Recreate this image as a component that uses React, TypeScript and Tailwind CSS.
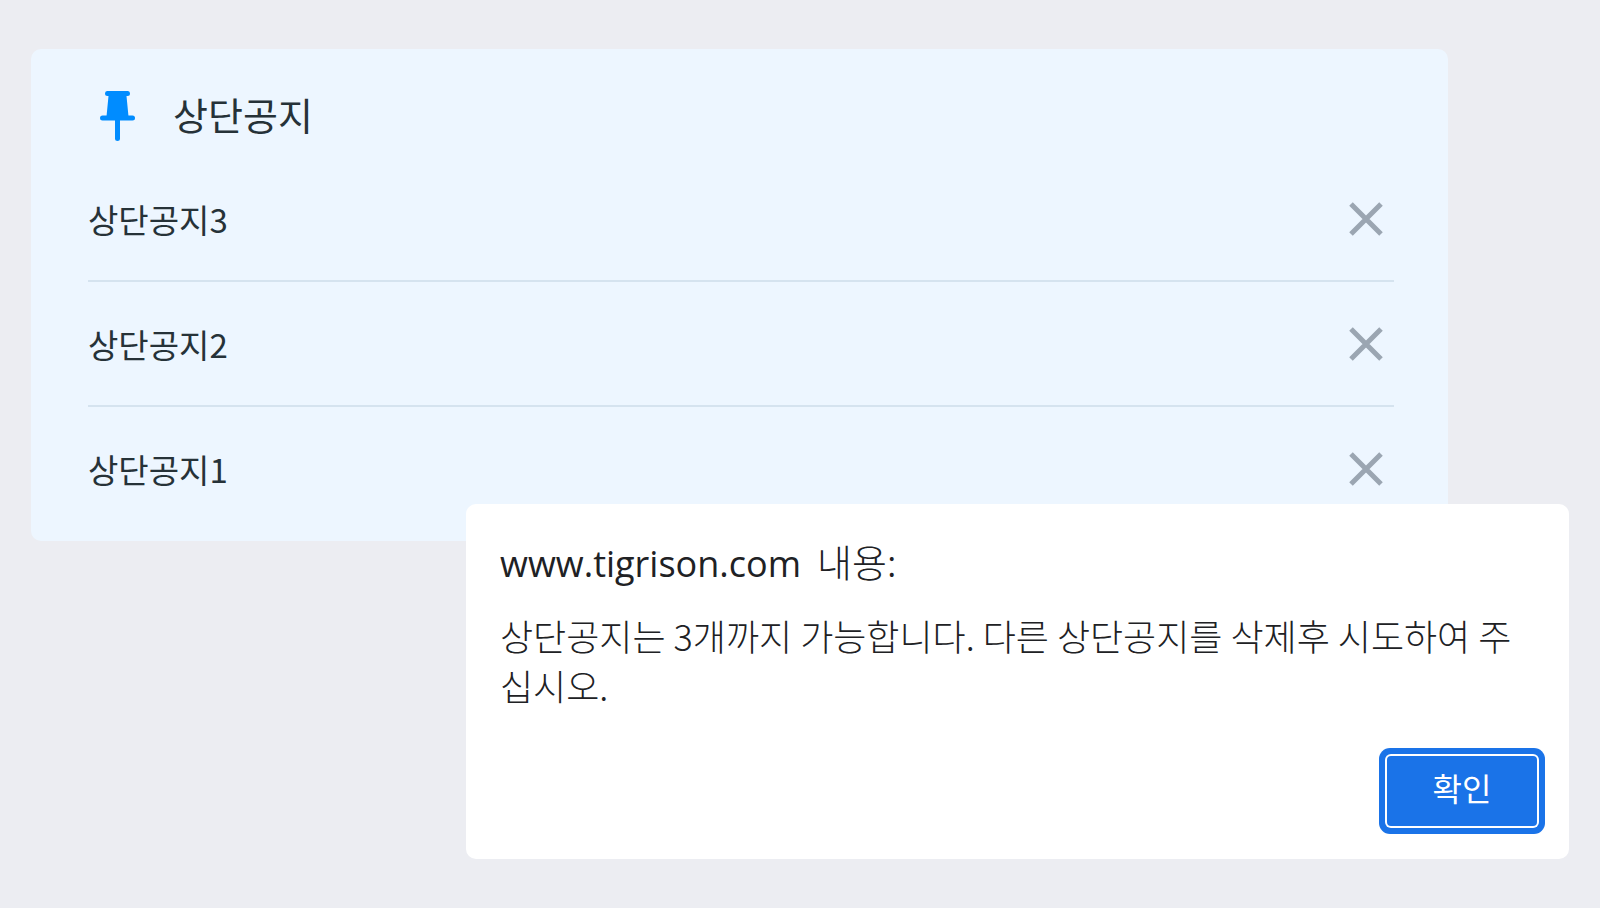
import { useState } from "react";

const initialNotices = [
  { id: 3, title: "상단공지3" },
  { id: 2, title: "상단공지2" },
  { id: 1, title: "상단공지1" },
];

function PinIcon() {
  return (
    <svg className="mt-0.5" width="35" height="50" viewBox="0 0 35 50" fill="#008cff" aria-hidden="true">
      <path d="M7 0H28Q30 0 30 2.500Q30 5 27.500 5H26.500L28.500 25.500H6.500L8.500 5H7.500Q5 5 5 2.500Q5 0 7 0Z" />
      <rect x="0" y="24.500" width="35" height="5" rx="2.500" />
      <path d="M15 29H20V48Q20 50 17.500 50Q15 50 15 48Z" />
    </svg>
  );
}

function CloseIcon() {
  return (
    <svg width="34" height="34" viewBox="0 0 34 34" fill="none" stroke="#9ba6b2" strokeWidth="5" aria-hidden="true">
      <path d="M2 2L32 32M32 2L2 32" />
    </svg>
  );
}

type NoticeRowProps = {
  title: string;
  onRemove: () => void;
};

function NoticeRow({ title, onRemove }: NoticeRowProps) {
  return (
    <li className="flex h-[125px] items-center justify-between border-b-2 border-[#d5e3ef] pr-[11px] last:border-b-transparent">
      <span className="text-[33px] leading-[48px]">{title}</span>
      <button type="button" aria-label={`${title} 삭제`} onClick={onRemove} className="cursor-pointer">
        <CloseIcon />
      </button>
    </li>
  );
}

export default function App() {
  const [notices, setNotices] = useState(initialNotices);
  const [open, setOpen] = useState(true);

  return (
    <div className="min-h-screen bg-[#ecedf2] px-[31px] pt-[49px] pb-12 font-['Noto_Sans_CJK_KR',sans-serif]">
      <section className="mr-[121px] rounded-[10px] bg-[#edf6ff] pt-10 pr-[54px] pb-[9px] pl-[57px] text-[#263238]">
        <div className="flex items-start gap-[38px] pl-3">
          <PinIcon />
          <h2 className="text-[38px] leading-[50px]">상단공지</h2>
        </div>
        <ul className="pt-4">
          {notices.map((notice) => (
            <NoticeRow
              key={notice.id}
              title={notice.title}
              onRemove={() => setNotices(notices.filter((n) => n.id !== notice.id))}
            />
          ))}
        </ul>
      </section>

      {open && (
        <div
          role="alertdialog"
          aria-labelledby="alert-title"
          aria-describedby="alert-message"
          className="relative -mt-[37px] ml-auto w-[1103px] max-w-full rounded-[10px] bg-white pt-[30px] pr-6 pb-[25px] pl-[34px] text-[#202124]"
        >
          <h1 id="alert-title" className="flex items-baseline gap-4 text-[38px] leading-[54px] font-light">
            <span className="font-['Open_Sans',sans-serif] text-[36px] font-normal">www.tigrison.com</span>
            <span>내용:</span>
          </h1>
          <p id="alert-message" className="pt-[19px] pr-5 text-[36px] leading-[50px] font-light">
            상단공지는 3개까지 가능합니다. 다른 상단공지를 삭제후 시도하여 주십시오.
          </p>
          <div className="flex justify-end p-2 pt-[46px]">
            <button
              type="button"
              onClick={() => setOpen(false)}
              className="h-[70px] w-[150px] cursor-pointer rounded-[4px] bg-[#1a73e8] pb-2 text-[32px] leading-[48px] text-white shadow-[0_0_0_2px_#fff,0_0_0_8px_#1a73e8]"
            >
              확인
            </button>
          </div>
        </div>
      )}
    </div>
  );
}
